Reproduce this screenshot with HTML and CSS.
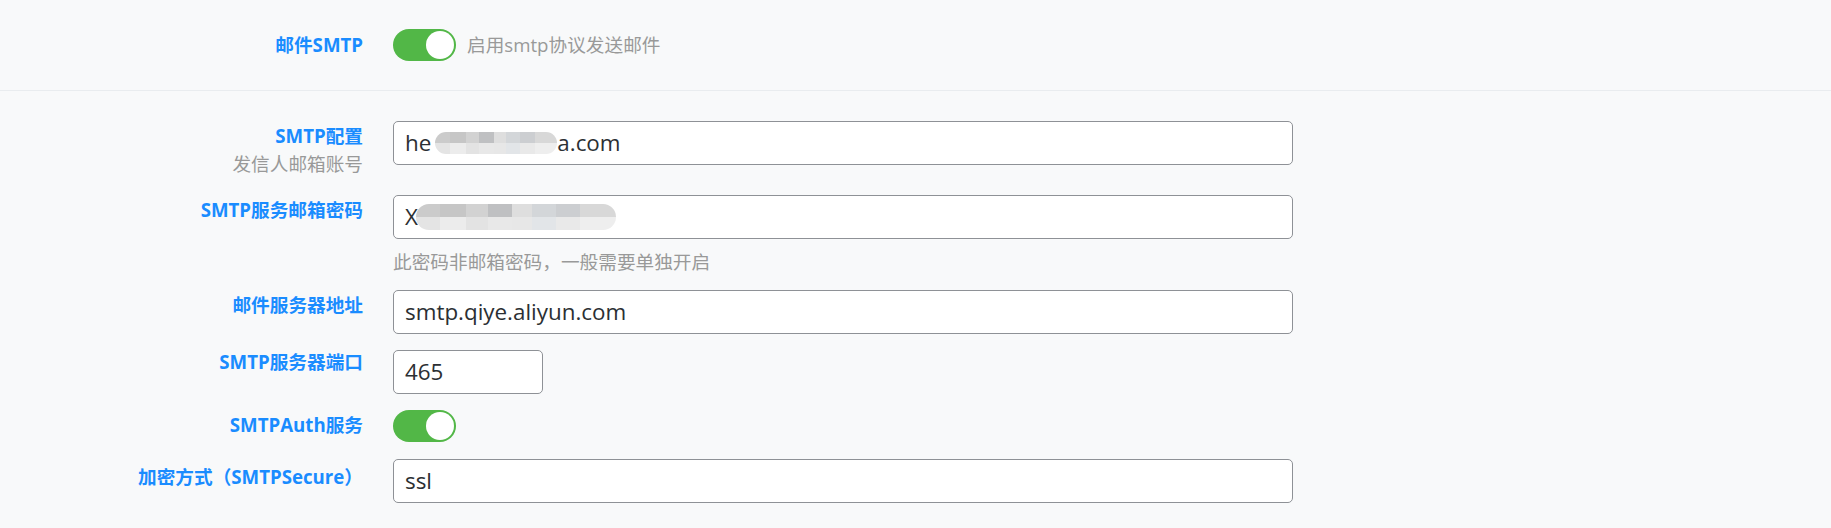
FILE: index.html
```html
<!DOCTYPE html>
<html lang="zh-CN">

<head>
    <meta charset="UTF-8">
    <meta name="viewport" content="width=device-width, initial-scale=1.0">
    <title>邮件SMTP设置</title>
    <link rel="stylesheet" href="styles.css">
</head>

<body>
    <div class="section section-top">
        <div class="form-row form-row-center">
            <label class="form-label">邮件SMTP</label>
            <div class="form-field field-inline">
                <span class="switch is-on"><span class="switch-knob"></span></span>
                <span class="switch-text">启用smtp协议发送邮件</span>
            </div>
        </div>
    </div>

    <div class="section section-body">
        <div class="form-row row-config">
            <label class="form-label">SMTP配置<small class="form-sublabel">发信人邮箱账号</small></label>
            <div class="form-field">
                <div class="form-control">he<span class="mosaic mosaic-email"></span>a.com</div>
            </div>
        </div>

        <div class="form-row row-password">
            <label class="form-label">SMTP服务邮箱密码</label>
            <div class="form-field">
                <div class="form-control">X<span class="mosaic mosaic-pass"></span></div>
                <p class="form-help">此密码非邮箱密码，一般需要单独开启</p>
            </div>
        </div>

        <div class="form-row row-host">
            <label class="form-label">邮件服务器地址</label>
            <div class="form-field">
                <div class="form-control">smtp.qiye.aliyun.com</div>
            </div>
        </div>

        <div class="form-row row-port">
            <label class="form-label label-tight">SMTP服务器端口</label>
            <div class="form-field">
                <div class="form-control form-control-sm">465</div>
            </div>
        </div>

        <div class="form-row row-auth">
            <label class="form-label">SMTPAuth服务</label>
            <div class="form-field">
                <span class="switch is-on"><span class="switch-knob"></span></span>
            </div>
        </div>

        <div class="form-row">
            <label class="form-label label-low">加密方式（SMTPSecure）</label>
            <div class="form-field">
                <div class="form-control">ssl</div>
            </div>
        </div>
    </div>
</body>

</html>
```

FILE: styles.css
```css
*,
*::before,
*::after {
    box-sizing: border-box;
    margin: 0;
    padding: 0;
}

:root {
    --blue: #1a8cff;
    --green: #52b747;
    --gray-bg: #f8f9fa;
    --gray-line: #e9ecef;
    --gray-text: #999999;
    --border: #8e9196;
    --text: #2b2f33;
}

body {
    font-family: "Open Sans", "Noto Sans CJK SC", sans-serif;
    font-size: 18.67px;
    line-height: 28px;
    background-color: var(--gray-bg);
    color: var(--text);
}

.section-top {
    height: 91px;
    border-bottom: 1px solid var(--gray-line);
    display: flex;
    align-items: center;
}

.section-body {
    padding-top: 30px;
}

.form-row {
    display: flex;
    align-items: flex-start;
    margin-bottom: 19px;
}

.form-row-center {
    align-items: center;
    margin-bottom: 0;
    width: 100%;
}

.form-label {
    width: 363px;
    flex-shrink: 0;
    text-align: right;
    color: var(--blue);
    font-weight: 700;
    padding-top: 1px;
}

.form-row-center .form-label {
    padding-top: 0;
}

.label-tight {
    padding-top: 0;
    margin-top: -2px;
}

.label-low {
    padding-top: 4px;
}

.form-sublabel {
    display: block;
    font-size: 18.67px;
    font-weight: 400;
    color: var(--gray-text);
}

.form-field {
    margin-left: 30px;
    width: 900px;
}

.field-inline {
    display: flex;
    align-items: center;
    gap: 11px;
}

.row-config {
    margin-bottom: 17px;
}

.row-password {
    margin-bottom: 14px;
}

.row-host {
    margin-bottom: 16px;
}

.row-port {
    margin-bottom: 16px;
}

.row-auth {
    margin-bottom: 17px;
}

.form-control {
    display: flex;
    align-items: center;
    width: 100%;
    height: 44px;
    padding: 0 11px;
    background-color: white;
    border: 1px solid var(--border);
    border-radius: 5px;
    color: var(--text);
    font-size: 22.4px;
    white-space: nowrap;
}

.form-control-sm {
    width: 150px;
}

.form-help {
    margin-top: 9px;
    color: var(--gray-text);
}

.switch-text {
    color: var(--gray-text);
}

.switch {
    display: flex;
    align-items: center;
    justify-content: flex-end;
    width: 63px;
    height: 32px;
    padding: 2px;
    border-radius: 16px;
    background-color: #dcdfe3;
}

.switch.is-on {
    background-color: var(--green);
}

.switch-knob {
    width: 28px;
    height: 28px;
    border-radius: 50%;
    background-color: white;
}

.mosaic {
    display: inline-block;
    height: 22px;
    border-radius: 11px;
    filter: blur(0.6px);
    background:
        linear-gradient(90deg, #cbcbcb 0 12%, #c6c6c6 12% 25%, #d2d2d2 25% 36%, #bfc0c2 36% 48%, #dedede 48% 58%, #d3d6d9 58% 70%, #ccced1 70% 82%, #d8d8d8 82% 100%) top / 100% 50% no-repeat,
        linear-gradient(90deg, #e4e4e4 0 12%, #ececec 12% 25%, #e3e3e3 25% 36%, #e8e8e8 36% 48%, #e7e7e7 48% 58%, #e2e5e8 58% 70%, #e9e9e9 70% 82%, #eeeeee 82% 100%) bottom / 100% 50% no-repeat;
}

.mosaic-email {
    width: 122px;
    margin-left: 4px;
}

.mosaic-pass {
    width: 200px;
    height: 26px;
    margin-left: -2px;
    border-radius: 13px;
}
```
